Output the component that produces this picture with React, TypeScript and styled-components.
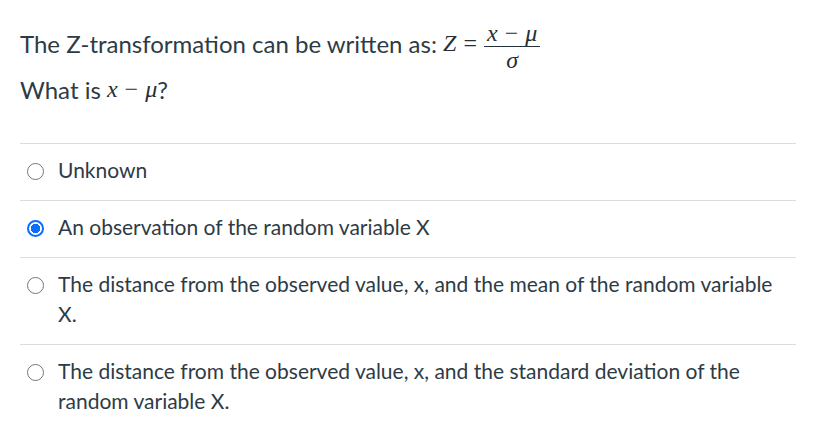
import React from "react";
import styled, { createGlobalStyle } from "styled-components";

const GlobalStyle = createGlobalStyle`
  body {
    margin: 0;
    background: #fff;
    font-family: Lato, "Open Sans", sans-serif;
    color: #2d3b45;
  }
`;

const Page = styled.div`
  width: 776px;
  padding: 20px 21px 0 20px;
`;

const Question = styled.div`
  font-size: 24px;
  margin-bottom: 31px;
`;

const QuestionLine = styled.div`
  display: flex;
  align-items: center;
  height: 46px;
  white-space: pre;
`;

const MathText = styled.span`
  font-family: "Liberation Serif", "Times New Roman", serif;
  font-style: italic;
  font-size: 24px;
  white-space: pre;
  color: #22303a;
`;

const Op = styled.span`
  font-style: normal;
  margin: 0 7px;
`;

const Fraction = styled.span`
  display: inline-flex;
  flex-direction: column;
  align-items: center;
  margin-left: 0;
  margin-top: 6px;
`;

const Numer = styled.span`
  padding: 0 3px 1px;
  border-bottom: 1.5px solid #22303a;
  line-height: 24px;
`;

const Denom = styled.span`
  line-height: 22px;
  padding-top: 2px;
`;

const Options = styled.div`
  display: flex;
  flex-direction: column;
`;

const Option = styled.label`
  display: flex;
  align-items: flex-start;
  gap: 14px;
  padding: 11px 0 15px 7px;
  border-top: 1px solid #dcdcdc;
  font-size: 21px;
  line-height: 30px;
`;

const Radio = styled.span<{ $checked?: boolean }>`
  flex: none;
  box-sizing: border-box;
  width: 17px;
  height: 17px;
  margin-top: 7.5px;
  border-radius: 50%;
  border: ${(p) => (p.$checked ? "2px solid #0b6dff" : "1px solid #767676")};
  background: ${(p) =>
    p.$checked ? "radial-gradient(circle, #0b6dff 0 4.5px, #fff 5px)" : "#fff"};
`;

const options = [
  { text: "Unknown", checked: false },
  { text: "An observation of the random variable X", checked: true },
  {
    text: "The distance from the observed value, x, and the mean of the random variable X.",
    checked: false,
  },
  {
    text: "The distance from the observed value, x, and the standard deviation of the random variable X.",
    checked: false,
  },
];

export default function App() {
  return (
    <Page>
      <GlobalStyle />
      <Question>
        <QuestionLine>
          The Z-transformation can be written as:{" "}
          <MathText>
            Z<Op>=</Op>
          </MathText>
          <MathText>
            <Fraction>
              <Numer>
                x<Op>−</Op>μ
              </Numer>
              <Denom>σ</Denom>
            </Fraction>
          </MathText>
        </QuestionLine>
        <QuestionLine>
          What is{" "}
          <MathText>
            x<Op>−</Op>μ
          </MathText>
          ?
        </QuestionLine>
      </Question>
      <Options>
        {options.map((o) => (
          <Option key={o.text}>
            <Radio $checked={o.checked} />
            <span>{o.text}</span>
          </Option>
        ))}
      </Options>
    </Page>
  );
}
